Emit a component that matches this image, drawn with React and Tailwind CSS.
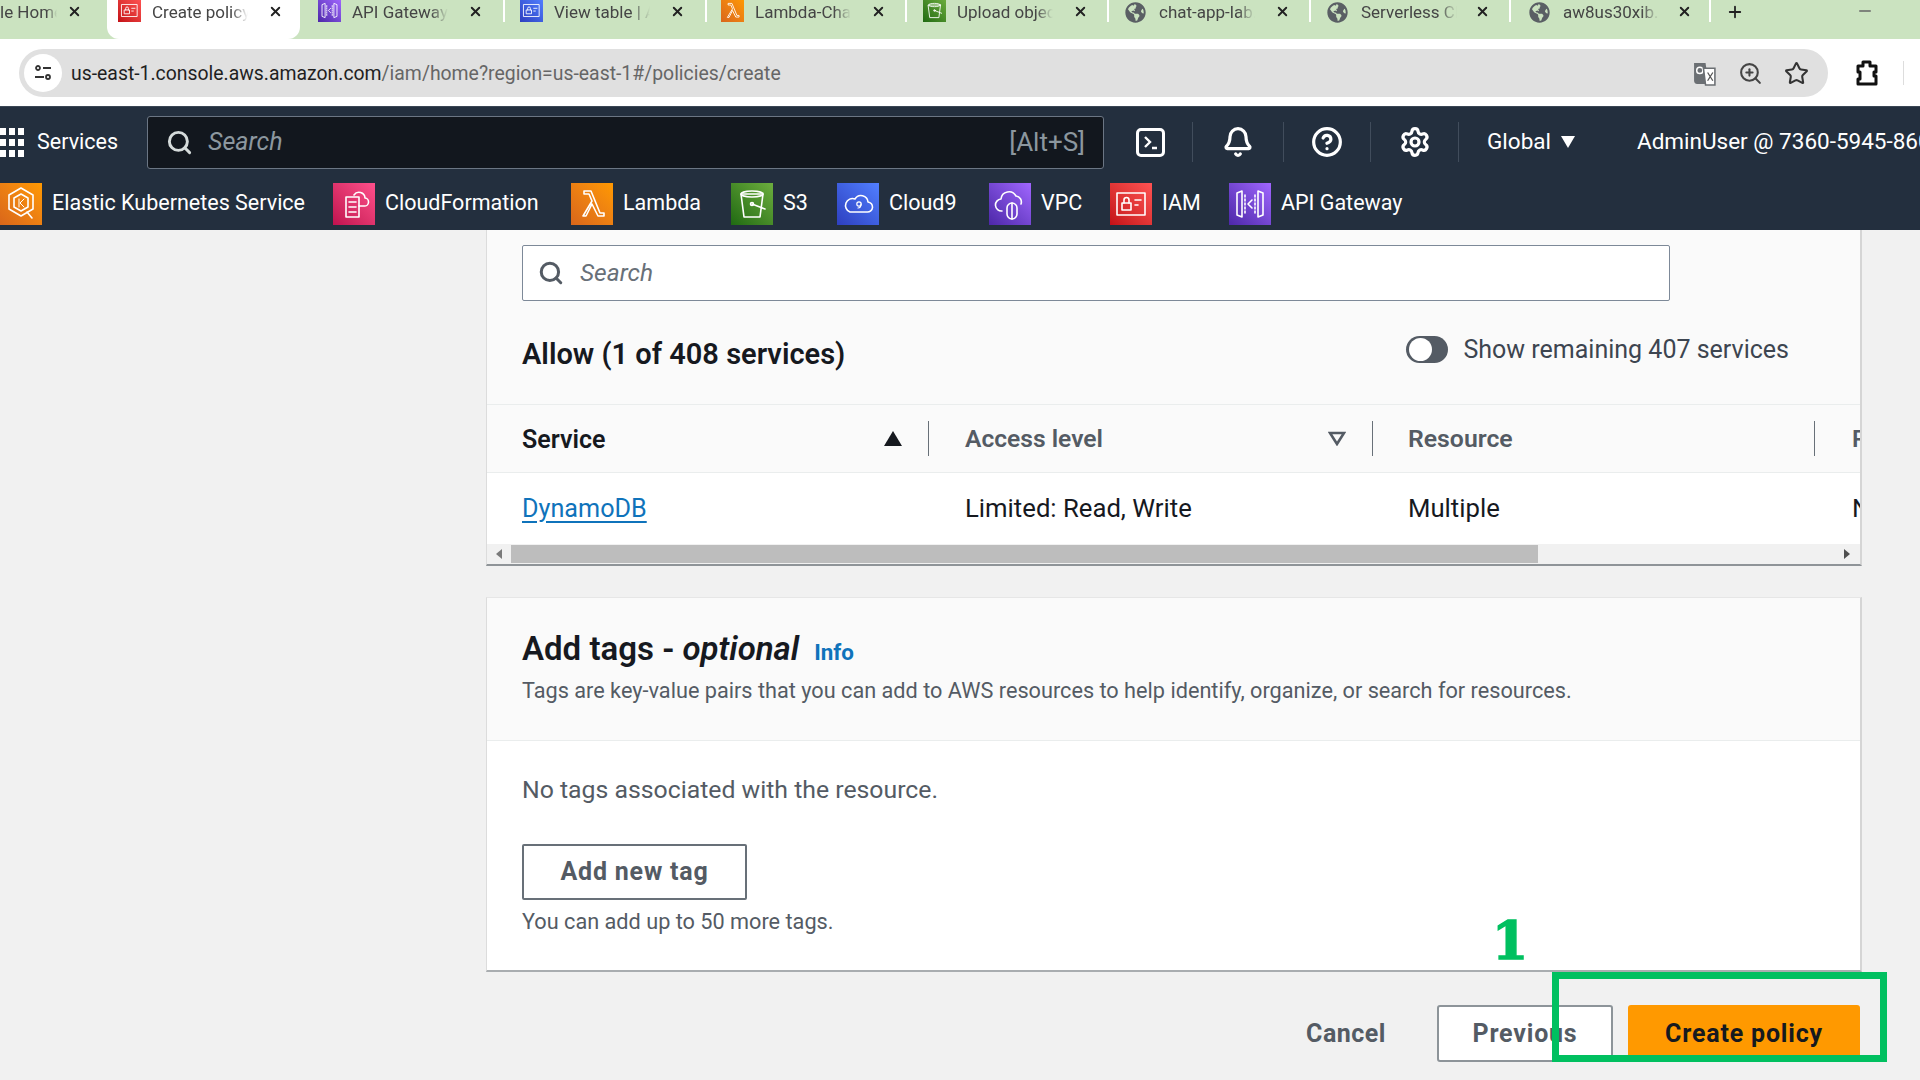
import React from "react";
import { Search, Bell, CircleHelp, Settings, Star, ZoomIn, X, Plus, Minus } from "lucide-react";
import { FaGlobeAmericas } from "react-icons/fa";

const S = { fill: "none", stroke: "white", strokeWidth: 1.6, strokeLinejoin: "round", strokeLinecap: "round" };

function Glyph({ name }) {
  const g = {
    eks: (<g {...S}><path d="M20 5l12 7v14l-12 7-12-7V12z" /><path d="M20 11l7 4v9l-7 4-7-4v-9z" /><path d="M26 29l5 6" /><path d="M18 16v8M23 16l-4 4 4 4" strokeWidth="1" /></g>),
    cf: (<g {...S}><path d="M12 14h13v20H12z" /><path d="M15 19h7M15 24h7M15 29h7" /><path d="M25 23h5a4 4 0 0 0 1-8 6 6 0 0 0-11-3" /></g>),
    lambda: (<path {...S} d="M11 33l9-15-3-7h-5V8h7l9 22h4v3h-6l-6-12-6 12z" />),
    s3: (<g {...S}><path d="M9 11h22l-3 23H12z" /><ellipse cx="20" cy="11" rx="11" ry="3" /><circle cx="20" cy="21" r="1.5" /><path d="M20 21l13 5" /></g>),
    c9: (<g {...S}><path d="M12 29h17a5 5 0 0 0 1-10 7 7 0 0 0-13-3 6 6 0 0 0-5 13z" /><circle cx="21" cy="21" r="2.2" strokeWidth="1.2" /><path d="M23 21c0 3-1 4-3 4" strokeWidth="1.2" /></g>),
    vpc: (<g {...S}><path d="M12 28a6 6 0 0 1-1-12 8 8 0 0 1 15-3 6 6 0 0 1 5 8" /><rect x="17" y="20" width="10" height="16" rx="5" /><path d="M22 20v16" /></g>),
    iam: (<g {...S}><rect x="6" y="10" width="28" height="22" /><rect x="11" y="20" width="9" height="7" /><path d="M13 20v-3a2.5 2.5 0 0 1 5 0v3" /><path d="M24 17h6M24 22h3" /></g>),
    api: (<g {...S}><path d="M7 10l5-2v26l-5-2zM33 10l-5-2v26l5-2z" /><path d="M15 12v18M25 12v18" strokeDasharray="2 2" /><path d="M22 17l-4 4 4 4" /></g>),
  };
  return <svg viewBox="0 0 40 42" className="w-full h-full">{g[name]}</svg>;
}

const tones = {
  orange: "bg-linear-to-tr from-[#d9661a] to-[#ff9900]",
  pink: "bg-linear-to-tr from-[#c0104f] to-[#ff4f8b]",
  green: "bg-linear-to-tr from-[#1f6a12] to-[#6cae3e]",
  blue: "bg-linear-to-tr from-[#2e3fc0] to-[#527fff]",
  purple: "bg-linear-to-tr from-[#4d27a8] to-[#a166ff]",
  red: "bg-linear-to-tr from-[#c40e16] to-[#ff5252]",
};

function Tile({ tone, name, className }) {
  return <span className={`shrink-0 block ${tones[tone]} ${className}`}><Glyph name={name} /></span>;
}

function Tab({ w, tone, name, title, active, sep, first, iconLeft = "ml-[16px]", closeLeft = "ml-[20px]" }) {
  return (
    <div className={`relative h-[39px] shrink-0 flex items-start ${w} ${active ? "bg-white rounded-b-[12px]" : ""} ${first ? "justify-end" : ""}`}>
      {!first && (tone ? (
        <Tile tone={tone} name={name} className={`w-[23px] h-[23px] mt-[-1px] ${iconLeft}`} />
      ) : (
        <FaGlobeAmericas className={`w-[21px] h-[21px] mt-[2px] mr-[2px] text-[#5a5f64] shrink-0 ${iconLeft}`} />
      ))}
      <span className={`${first ? "w-[58px]" : "w-[96px] ml-[11px]"} h-[24px] leading-[24px] text-[17px] text-[#454545] whitespace-nowrap overflow-hidden [mask-image:linear-gradient(to_right,black_82%,transparent)]`}>{title}</span>
      <X className={`w-[15px] h-[15px] mt-[4px] text-[#222] shrink-0 ${first ? "ml-[10px] mr-[25px]" : closeLeft}`} strokeWidth={3} />
      {sep && <span className="absolute right-0 top-0 w-[2px] h-[22px] bg-white" />}
    </div>
  );
}

function Fav({ tone, name, label, w }) {
  return (
    <div className="flex items-center gap-[10px]">
      <Tile tone={tone} name={name} className="w-[42px] h-[42px]" />
      <span className={`${w} text-[21.5px] text-white whitespace-nowrap`}>{label}</span>
    </div>
  );
}

const Sep = () => <span className="block w-px h-[40px] bg-[#414d5c]" />;

const strongBtn = "text-[25px] tracking-[0.8px] font-bold";

export default function App() {
  return (
    <div className="relative w-[1920px] h-[1080px] overflow-hidden flex flex-col bg-[#f1f1f1] font-['Roboto','Noto_Sans',sans-serif]">
      {/* tabs */}
      <div className="h-[39px] shrink-0 bg-[#cbe3c0] flex">
        <Tab first w="w-[107px]" title="le Home" />
        <Tab active w="w-[193px]" tone="red" name="iam" title="Create policy" iconLeft="ml-[11px]" />
        <Tab sep w="w-[205px]" tone="purple" name="api" title="API Gateway" iconLeft="ml-[18px]" />
        <Tab sep w="w-[202px]" tone="blue" name="iam" title="View table | Amazon" iconLeft="ml-[15px]" />
        <Tab sep w="w-[200px]" tone="orange" name="lambda" title="Lambda-Chat" iconLeft="ml-[14px]" />
        <Tab sep w="w-[202px]" tone="green" name="s3" title="Upload objects" />
        <Tab sep w="w-[202px]" title="chat-app-lab.s3" />
        <Tab sep w="w-[200px]" title="Serverless Chat" closeLeft="ml-[18px]" />
        <Tab sep w="w-[200px]" title="aw8us30xib.execute" iconLeft="ml-[18px]" closeLeft="ml-[18px]" />
        <div className="flex-1 flex items-start justify-between pr-[46px]">
          <Plus className="w-[18px] h-[18px] mt-[3px] ml-[15px] text-[#222]" strokeWidth={2.4} />
          <Minus className="w-[18px] h-[18px] mt-[2px] text-[#666]" />
        </div>
      </div>

      {/* address */}
      <div className="h-[67px] shrink-0 bg-white flex items-center pl-[19px]">
        <div className="w-[1809px] h-[48px] mt-[1px] rounded-full bg-[#e0e0e0] flex items-center pl-[5px] pr-[19px]">
          <span className="w-[38px] h-[38px] rounded-full bg-white flex items-center justify-center">
            <svg viewBox="0 0 20 20" className="w-[20px] h-[20px]" fill="none" stroke="#333" strokeWidth="1.8">
              <circle cx="5" cy="5" r="2" /><path d="M10 5h8M2 14h9" /><circle cx="15" cy="14" r="2" />
            </svg>
          </span>
          <span className="ml-[9px] pt-[2px] text-[19.4px] text-[#1f1f1f] whitespace-nowrap">us-east-1.console.aws.amazon.com<span className="text-[#666]">/iam/home?region=us-east-1#/policies/create</span></span>
          <div className="ml-auto flex items-center gap-[21px]">
            <svg viewBox="0 0 24 24" className="w-[25px] h-[25px]">
              <path d="M2 2h11l3 20H5a3 3 0 0 1-3-3z" fill="#6b6f73" />
              <circle cx="7.5" cy="9" r="3" fill="none" stroke="#fff" strokeWidth="1.4" />
              <path d="M11 7h11v16H13z" fill="#fff" stroke="#6b6f73" strokeWidth="1.5" />
              <path d="M15 11l5 8M20 11l-5 8" stroke="#555" strokeWidth="1.2" />
            </svg>
            <ZoomIn className="w-[25px] h-[25px] text-[#444]" strokeWidth={2} />
            <Star className="w-[25px] h-[25px] text-[#333]" strokeWidth={2} />
          </div>
        </div>
        <svg viewBox="0 0 24 28" className="ml-[27px] w-[24px] h-[28px]" fill="none" stroke="#111" strokeWidth="3" strokeLinejoin="round">
          <path d="M3 7h5V3h7v4h6v6h-2v4h2v8H3v-5h2v-7H3z" />
        </svg>
        <span className="ml-[24px] w-px h-[24px] bg-[#ddd]" />
      </div>

      {/* aws top nav */}
      <div className="h-[71px] shrink-0 bg-[#232f3e] flex items-center border-t border-[#3a4654]">
        <svg viewBox="0 0 24 29" className="w-[24px] h-[29px] shrink-0" fill="white">
          <rect x="0" y="0" width="6" height="7" /><rect x="9" y="0" width="6" height="7" /><rect x="18" y="0" width="6" height="7" />
          <rect x="0" y="11" width="6" height="7" /><rect x="9" y="11" width="6" height="7" /><rect x="18" y="11" width="6" height="7" />
          <rect x="0" y="22" width="6" height="7" /><rect x="9" y="22" width="6" height="7" /><rect x="18" y="22" width="6" height="7" />
        </svg>
        <span className="ml-[13px] w-[80px] text-[21.5px] text-white">Services</span>
        <div className="ml-[30px] w-[957px] h-[53px] rounded-[3px] bg-[#12171e] border border-[#6b7684] flex items-center px-[18px] shrink-0">
          <Search className="w-[27px] h-[27px] text-[#d5dbdb]" strokeWidth={2.6} />
          <span className="ml-[15px] text-[25px] italic text-[#8c979f]">Search</span>
          <span className="ml-auto text-[26px] text-[#8c979f]">[Alt+S]</span>
        </div>
        <div className="ml-[32px] w-[29px] h-[29px] rounded-[5px] border-[3px] border-white flex items-center justify-center shrink-0">
          <svg viewBox="0 0 20 20" className="w-[20px] h-[20px]" fill="none" stroke="white" strokeWidth="2.4"><path d="M4 5l5 5-5 5M11 16h5" /></svg>
        </div>
        <span className="ml-[27px]"><Sep /></span>
        <Bell className="ml-[29px] w-[32px] h-[32px] text-white shrink-0" strokeWidth={2.4} />
        <span className="ml-[29px]"><Sep /></span>
        <CircleHelp className="ml-[27px] w-[32px] h-[32px] text-white shrink-0" strokeWidth={2.4} />
        <span className="ml-[27px]"><Sep /></span>
        <Settings className="ml-[28px] w-[32px] h-[32px] text-white shrink-0" strokeWidth={2.4} />
        <span className="ml-[27px]"><Sep /></span>
        <span className="ml-[28px] text-[22.5px] text-white">Global</span>
        <svg viewBox="0 0 14 12" className="ml-[10px] w-[14px] h-[12px] shrink-0" fill="white"><path d="M0 0h14L7 12z" /></svg>
        <span className="ml-[62px] text-[22.5px] text-white whitespace-nowrap">AdminUser @ 7360-5945-8602</span>
      </div>

      {/* favorites */}
      <div className="h-[53px] shrink-0 bg-[#232f3e] flex items-center gap-[30px]">
        <Fav tone="orange" name="eks" label="Elastic Kubernetes Service" w="w-[251px]" />
        <Fav tone="pink" name="cf" label="CloudFormation" w="w-[156px]" />
        <Fav tone="orange" name="lambda" label="Lambda" w="w-[78px]" />
        <Fav tone="green" name="s3" label="S3" w="w-[24px]" />
        <Fav tone="blue" name="c9" label="Cloud9" w="w-[70px]" />
        <Fav tone="purple" name="vpc" label="VPC" w="w-[39px]" />
        <Fav tone="red" name="iam" label="IAM" w="w-[37px]" />
        <Fav tone="purple" name="api" label="API Gateway" w="w-[122px]" />
      </div>

      {/* content */}
      <div className="pl-[486px] pr-[58px] flex flex-col">
        {/* permissions card */}
        <div className="h-[336px] bg-white border-l border-[#dcdcdc] border-r-2 border-r-[#d5d5d5] border-b-2 border-b-[#8f9498] flex flex-col">
          <div className="h-[175px] bg-[#fafafa] px-[35px] pt-[15px] border-b border-[#eaeded] shrink-0">
            <div className="w-[1148px] h-[56px] bg-white border border-[#7d8998] rounded-[2px] flex items-center px-[15px]">
              <Search className="w-[26px] h-[26px] text-[#545b64]" strokeWidth={2.8} />
              <span className="ml-[16px] text-[24.5px] italic text-[#687078]">Search</span>
            </div>
            <div className="flex items-center justify-between mt-[25px] pr-[36px]">
              <span className="text-[29px] font-semibold text-[#16191f] mt-[7px]">Allow (1 of 408 services)</span>
              <div className="flex items-center gap-[15px] mt-[-4px]">
                <span className="w-[42px] h-[27px] rounded-full bg-[#545b64] flex items-center pl-[3px]">
                  <span className="w-[23px] h-[23px] rounded-full bg-white" />
                </span>
                <span className="text-[25px] text-[#3d4550]">Show remaining 407 services</span>
              </div>
            </div>
          </div>
          <div className="h-[68px] shrink-0 bg-[#fafafa] border-b border-[#eaeded] flex items-center overflow-hidden">
            <div className="w-[442px] shrink-0 h-[35px] border-r border-[#687078] pl-[35px] pr-[26px] flex items-center justify-between">
              <span className="pt-[2px] text-[25px] font-semibold text-[#16191f]">Service</span>
              <svg viewBox="0 0 18 15" className="w-[18px] h-[15px]" fill="#16191f"><path d="M9 0l9 15H0z" /></svg>
            </div>
            <div className="w-[444px] shrink-0 h-[35px] border-r border-[#687078] pl-[36px] pr-[26px] flex items-center justify-between">
              <span className="pt-[2px] text-[24.6px] font-semibold text-[#545b64]">Access level</span>
              <svg viewBox="0 0 18 15" className="w-[18px] h-[15px]" fill="none" stroke="#545b64" strokeWidth="2.6"><path d="M2 2h14l-7 11z" /></svg>
            </div>
            <div className="w-[442px] shrink-0 h-[35px] border-r border-[#687078] pl-[35px] flex items-center">
              <span className="pt-[1px] text-[24.8px] font-semibold text-[#545b64]">Resource</span>
            </div>
            <span className="ml-[37px] text-[24px] font-semibold text-[#545b64]">Request</span>
          </div>
          <div className="h-[71px] shrink-0 flex items-center overflow-hidden text-[25.7px] text-[#16191f]">
            <span className="w-[443px] shrink-0 pl-[35px]"><span className="text-[25.2px] text-[#0f73bb] underline underline-offset-[4px]">DynamoDB</span></span>
            <span className="w-[443px] shrink-0 pl-[35px]">Limited: Read, Write</span>
            <span className="w-[443px] shrink-0 pl-[35px]">Multiple</span>
            <span className="ml-[36px]">None</span>
          </div>
          <div className="flex-1 bg-[#f1f1f1] flex items-center">
            <svg viewBox="0 0 6 10" className="ml-[9px] w-[6px] h-[10px]" fill="#7a7a7a"><path d="M6 0v10L0 5z" /></svg>
            <span className="ml-[9px] w-[1027px] h-[18px] bg-[#bdbdbd]" />
            <svg viewBox="0 0 6 10" className="ml-auto mr-[10px] w-[6px] h-[10px]" fill="#505050"><path d="M0 0v10l6-5z" /></svg>
          </div>
        </div>

        {/* tags card */}
        <div className="mt-[31px] h-[375px] bg-white border-l border-[#dcdcdc] border-r-2 border-r-[#d5d5d5] border-b-2 border-b-[#a9adb0] border-t border-t-[#e6e6e6] flex flex-col">
          <div className="h-[143px] shrink-0 bg-[#fafafa] border-b border-[#eaeded] px-[35px] pt-[26px]">
            <div className="flex items-baseline">
              <span className="text-[33px] font-semibold text-[#16191f]">Add tags - <em>optional</em></span>
              <span className="ml-[15px] text-[22.4px] font-bold text-[#0f73bb]">Info</span>
            </div>
            <div className="mt-[1px] text-[21.7px] text-[#545b64] whitespace-nowrap">Tags are key-value pairs that you can add to AWS resources to help identify, organize, or search for resources.</div>
          </div>
          <div className="flex-1 px-[35px] pt-[30px]">
            <div className="text-[24.8px] text-[#545b64]">No tags associated with the resource.</div>
            <div className={`mt-[36px] w-[225px] h-[56px] bg-white border-2 border-[#687078] rounded-[2px] flex items-center justify-center text-[#545b64] ${strongBtn}`}>Add new tag</div>
            <div className="mt-[6px] text-[21.7px] text-[#545b64]">You can add up to 50 more tags.</div>
          </div>
        </div>

        {/* footer */}
        <div className="mt-[33px] pr-[2px] flex items-center justify-end">
          <span className="text-[25px] tracking-[0.5px] font-bold text-[#545b64]">Cancel</span>
          <div className={`ml-[51px] w-[176px] h-[57px] bg-white border-2 border-[#8d9499] rounded-[3px] flex items-center justify-center text-[#545b64] ${strongBtn}`}>Previous</div>
          <div className={`ml-[15px] w-[232px] h-[57px] bg-[#ff9900] rounded-[3px] flex items-center justify-center text-[#16191f] ${strongBtn}`}>Create policy</div>
        </div>
      </div>

      {/* annotation overlay */}
      <span className="absolute left-[1492px] top-[909px] text-[52px] leading-[64px] font-bold text-[#00c060] font-['DejaVu_Serif',serif] [-webkit-text-stroke:1.5px_#00c060]">1</span>
      <div className="absolute left-[1552px] top-[972px] w-[335px] h-[90px] border-[7px] border-[#00c060]" />
    </div>
  );
}
